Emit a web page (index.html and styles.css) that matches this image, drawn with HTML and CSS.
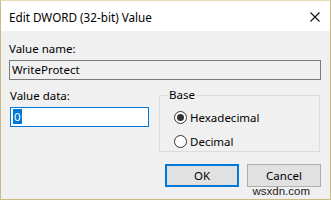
FILE: index.html
```html
<!DOCTYPE html>
<html>
<head>
<meta charset="utf-8">
<link rel="stylesheet" href="styles.css">
</head>
<body>
<div class="window">
  <div class="titlebar">
    <span class="title">Edit DWORD (32-bit) Value</span>
    <svg class="close" width="10" height="10" viewBox="0 0 10 10"><path d="M0.5 0.5L9.5 9.5M9.5 0.5L0.5 9.5" stroke="#111" stroke-width="1.1" fill="none"/></svg>
  </div>
  <div class="content">
    <div class="label">Value name:</div>
    <div class="field readonly">WriteProtect</div>
    <div class="row">
      <div class="col">
        <div class="label label-data">Value data:</div>
        <div class="field focused"><span class="sel">0</span></div>
      </div>
      <fieldset class="group">
        <legend>Base</legend>
        <div class="radio-row"><span class="radio checked"></span><span>Hexadecimal</span></div>
        <div class="radio-row"><span class="radio"></span><span>Decimal</span></div>
      </fieldset>
    </div>
    <div class="buttons">
      <div class="btn default">OK</div>
      <div class="btn">Cancel</div>
    </div>
  </div>
  <div class="watermark">wsxdn.com</div>
</div>
</body>
</html>
```
FILE: styles.css
```css
html, body {
  margin: 0;
  padding: 0;
  background: #ffffff;
}
body {
  font-family: "Noto Sans", "Open Sans", sans-serif;
  font-size: 11.5px;
  color: #000;
}
.window {
  position: relative;
  width: 331px;
  height: 200px;
  box-sizing: border-box;
  border: 1px solid #cbbb80;
  border-top-color: #e6dcb8;
  background: #f0f0f0;
  overflow: hidden;
}
.titlebar {
  height: 30px;
  background: #ffffff;
  display: flex;
  align-items: center;
  justify-content: space-between;
  padding: 0 10px 0 8px;
}
.title {
  font-size: 11.7px;
  line-height: 16px;
  margin-top: 1px;
}
.close {
  display: block;
  margin-top: 1px;
}
.content {
  padding: 10px 9px 0 8px;
}
.label {
  line-height: 16px;
  height: 16px;
}
.field {
  box-sizing: border-box;
  height: 20px;
  border: 1px solid #7a7a7a;
  padding: 0 2px;
  line-height: 18px;
  margin-top: 3px;
}
.readonly {
  background: #f0f0f0;
}
.row {
  display: flex;
  margin-top: 8px;
}
.col {
  width: 139px;
  margin-left: 1px;
}
.focused {
  background: #fff;
  border-color: #0078d7;
  margin-top: 3px;
}
.sel {
  background: #0078d7;
  color: #fff;
  padding: 0 1px;
}
.group {
  margin: 0 0 0 10px;
  padding: 0;
  border: 1px solid #dcdcdc;
  width: 161px;
  height: 64px;
  box-sizing: border-box;
}
.group legend {
  padding: 0 2px;
  margin-left: 7px;
  line-height: 14px;
}
.radio-row {
  display: flex;
  align-items: center;
  gap: 3px;
  height: 16px;
  margin-left: 14px;
  margin-top: 7px;
}
.radio-row + .radio-row {
  margin-top: 8px;
}
.radio {
  width: 13px;
  height: 13px;
  box-sizing: border-box;
  border: 1px solid #333;
  border-radius: 50%;
  background: #fff;
  display: flex;
  align-items: center;
  justify-content: center;
}
.radio.checked::after {
  content: "";
  width: 7px;
  height: 7px;
  border-radius: 50%;
  background: #333;
}
.buttons {
  display: flex;
  justify-content: flex-end;
  gap: 8px;
  margin-top: 12px;
}
.btn {
  box-sizing: border-box;
  width: 74px;
  height: 23px;
  background: #e1e1e1;
  border: 1px solid #adadad;
  text-align: center;
  line-height: 21px;
}
.btn.default {
  border: 2px solid #0078d7;
  line-height: 19px;
}
.watermark {
  position: absolute;
  right: 20px;
  bottom: 2px;
  font-family: "Liberation Sans", sans-serif;
  font-size: 11.5px;
  color: #222;
}
```
